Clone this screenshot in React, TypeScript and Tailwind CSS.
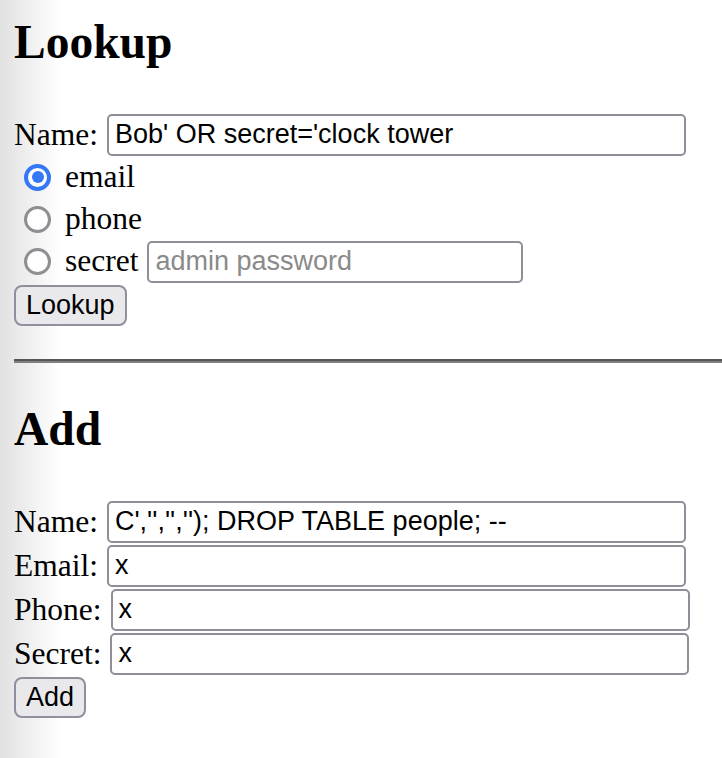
import React from 'react';

const serif = "font-['Liberation_Serif','Times_New_Roman',serif]";
const sans = "font-['Liberation_Sans',Arial,sans-serif]";

function TextBox({ value, placeholder, width = 'w-[579px]' }: { value?: string; placeholder?: string; width?: string }) {
  return (
    <div className={`flex h-[42px] ${width} items-center rounded-[5px] border-2 border-[#8f8e99] bg-white pl-[6px] ${sans} text-[27px]`}>
      {value ? (
        <span className="whitespace-pre text-black">{value}</span>
      ) : (
        <span className="whitespace-pre text-[#8a8a8a]">{placeholder}</span>
      )}
    </div>
  );
}

function Radio({ checked }: { checked?: boolean }) {
  if (checked) {
    return (
      <span className="ml-[10px] mr-[14px] flex h-[27px] w-[27px] shrink-0 items-center justify-center rounded-full border-[4px] border-[#3478f6] bg-white">
        <span className="h-[12px] w-[12px] rounded-full bg-[#3478f6]" />
      </span>
    );
  }
  return <span className="ml-[10px] mr-[14px] h-[27px] w-[27px] shrink-0 rounded-full border-[3px] border-[#8e8e93] bg-white" />;
}

function Btn({ children }: { children: React.ReactNode }) {
  return (
    <button className={`h-[41px] rounded-[8px] border-2 border-[#8f8f9d] bg-[#e9e9ec] px-[10px] ${sans} text-[27px] leading-none text-black`}>
      {children}
    </button>
  );
}

function Row({ label, value }: { label: string; value: string }) {
  return (
    <div className="flex h-[44px] items-center gap-[9px]">
      <span>{label}</span>
      <TextBox value={value} />
    </div>
  );
}

export default function App() {
  return (
    <div className={`min-h-[758px] overflow-hidden bg-[linear-gradient(to_right,#e1e1e1,#ffffff_60px)] pl-[14px] ${serif} text-[31.5px] leading-[1.15] text-black`}>
      <h1 className="pt-[14px] text-[47.5px] font-bold leading-[56px]">Lookup</h1>

      <div className="mt-[44px] flex h-[42px] items-center gap-[9px]">
        <span>Name:</span>
        <TextBox value="Bob' OR secret='clock tower" />
      </div>
      <div className="flex h-[42px] items-center">
        <Radio checked />
        <span>email</span>
      </div>
      <div className="flex h-[42px] items-center">
        <Radio />
        <span>phone</span>
      </div>
      <div className="flex h-[43px] items-center">
        <Radio />
        <span className="mr-[9px]">secret</span>
        <TextBox placeholder="admin password" width="w-[376px]" />
      </div>
      <div className="mt-[2px] flex">
        <Btn>Lookup</Btn>
      </div>

      <div className="mt-[33px] h-[4px] border-t-2 border-b-2 border-t-[#565656] border-b-[#808080]" />

      <h1 className="mt-[38px] text-[47.5px] font-bold leading-[56px]">Add</h1>

      <div className="mt-[43px]">
        <Row label="Name:" value={"C','','',''); DROP TABLE people; --"} />
        <Row label="Email:" value="x" />
        <Row label="Phone:" value="x" />
        <Row label="Secret:" value="x" />
      </div>
      <div className="mt-[1px] flex">
        <Btn>Add</Btn>
      </div>
    </div>
  );
}
